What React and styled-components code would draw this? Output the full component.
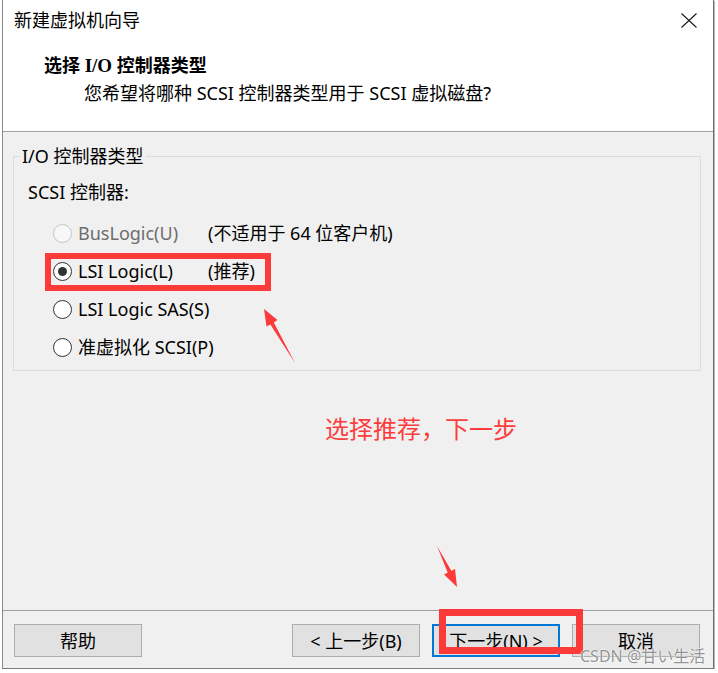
import React from "react";
import styled, { createGlobalStyle } from "styled-components";

const GlobalStyle = createGlobalStyle`
  html, body { margin: 0; padding: 0; background: #ffffff; }
  body { font-family: "Noto Sans", "Noto Sans CJK SC", sans-serif; color: #000; }
  * { box-sizing: border-box; }
`;

const Window = styled.div`
  position: relative;
  margin-left: 2px;
  width: 712px;
  height: 669px;
  background: #f0f0f0;
  border-left: 1px solid #8a8a8a;
  border-right: 1px solid #6f6f6f;
  border-bottom: 1px solid #7a7a7a;
  box-shadow: 1px 1px 0 #b8b8b8;
  display: flex;
  flex-direction: column;
`;

const Header = styled.div`
  height: 132px;
  background: #ffffff;
  border-bottom: 1px solid #a0a0a0;
  display: flex;
  flex-direction: column;
`;

const TitleBar = styled.div`
  height: 40px;
  display: flex;
  align-items: center;
  justify-content: space-between;
  padding: 0 16px 0 11px;
`;

const Title = styled.div`
  font-size: 18px;
  line-height: 24px;
`;

const Heading = styled.div`
  margin-top: 12px;
  padding-left: 41px;
  font-size: 18px;
  line-height: 26px;
  font-weight: 700;
`;

const SerifLatin = styled.span`
  font-family: "Liberation Serif", "Noto Sans CJK SC", serif;
  font-size: 19px;
`;

const Subtitle = styled.div`
  margin-top: 1px;
  padding-left: 81px;
  font-size: 18px;
  line-height: 26px;
`;

const Body = styled.div`
  height: 479px;
  border-bottom: 1px solid #a0a0a0;
  padding: 13px 12px 0 10px;
  display: flex;
  flex-direction: column;
`;

const Group = styled.fieldset`
  margin: 0;
  padding: 0 0 4px 0;
  width: 688px;
  border: 1px solid #dcdcdc;
  min-width: 0;
`;

const Legend = styled.legend`
  margin-left: 6px;
  padding: 0 2px;
  font-size: 18px;
  line-height: 22px;
`;

const SectionLabel = styled.div`
  margin: 13px 0 10px 14px;
  font-size: 18px;
  line-height: 24px;
`;

const OptionRow = styled.div`
  height: 38px;
  display: flex;
  align-items: center;
  padding-left: 39px;
  font-size: 18px;
  color: ${(p) => (p.$disabled ? "#6d6d6d" : "#000")};
`;

const Radio = styled.span`
  position: relative;
  flex: none;
  width: 19px;
  height: 19px;
  border-radius: 50%;
  border: 1px solid ${(p) => (p.$disabled ? "#c4c4c4" : "#333333")};
  background: ${(p) => (p.$disabled ? "#f7f7f7" : "#ffffff")};
  margin-right: 6px;
  &::after {
    content: "";
    display: ${(p) => (p.$checked ? "block" : "none")};
    position: absolute;
    left: 4px;
    top: 4px;
    width: 9px;
    height: 9px;
    border-radius: 50%;
    background: #333333;
  }
`;

const OptionLabel = styled.span`
  width: 130px;
  flex: none;
  line-height: 24px;
  white-space: nowrap;
`;

const OptionNote = styled.span`
  color: #000;
  line-height: 24px;
  white-space: nowrap;
`;

const Hint = styled.div`
  margin-top: 42px;
  padding-left: 312px;
  font-size: 24px;
  line-height: 32px;
  color: #fc3d3d;
`;

const Footer = styled.div`
  height: 57px;
  padding: 13px 13px 0 11px;
  display: flex;
  align-items: flex-start;
  gap: 12px;
`;

const Spacer = styled.div`
  flex: 1;
`;

const Button = styled.div`
  width: 128px;
  height: 33px;
  display: flex;
  align-items: center;
  justify-content: center;
  background: #e1e1e1;
  border: ${(p) => (p.$default ? "2px solid #0078d7" : "1px solid #adadad")};
  font-size: 18px;
  line-height: 24px;
  color: #000;
  white-space: nowrap;
`;

const RedBox = styled.div`
  position: absolute;
  left: ${(p) => p.$x - 3}px;
  top: ${(p) => p.$y}px;
  width: ${(p) => p.$w}px;
  height: ${(p) => p.$h}px;
  border: ${(p) => p.$t}px solid #fc3a3a;
  pointer-events: none;
`;

const ArrowLayer = styled.svg`
  position: absolute;
  left: 0;
  top: 0;
  width: 710px;
  height: 668px;
  pointer-events: none;
`;

const Watermark = styled.div`
  position: absolute;
  left: 577px;
  top: 645px;
  font-size: 16px;
  line-height: 22px;
  color: rgba(110, 110, 110, 0.75);
  text-shadow: 0 0 2px #ffffff, 0 0 1px #ffffff;
  white-space: nowrap;
  pointer-events: none;
`;

const CloseIcon = () => (
  <svg width="16" height="15" viewBox="0 0 16 15" aria-hidden="true">
    <path d="M0.5 0.5 L15.5 14.5 M15.5 0.5 L0.5 14.5" stroke="#1a1a1a" strokeWidth="1.1" fill="none" />
  </svg>
);

const options = [
  { label: "BusLogic(U)", note: "(不适用于 64 位客户机)", disabled: true },
  { label: "LSI Logic(L)", note: "(推荐)", checked: true },
  { label: "LSI Logic SAS(S)" },
  { label: "准虚拟化 SCSI(P)" },
];

export default function App() {
  return (
    <>
      <GlobalStyle />
      <Window>
        <Header>
          <TitleBar>
            <Title>新建虚拟机向导</Title>
            <CloseIcon />
          </TitleBar>
          <Heading>
            选择 <SerifLatin>I/O</SerifLatin> 控制器类型
          </Heading>
          <Subtitle>您希望将哪种 SCSI 控制器类型用于 SCSI 虚拟磁盘?</Subtitle>
        </Header>
        <Body>
          <Group>
            <Legend>I/O 控制器类型</Legend>
            <SectionLabel>SCSI 控制器:</SectionLabel>
            {options.map((o) => (
              <OptionRow key={o.label} $disabled={o.disabled}>
                <Radio $checked={o.checked} $disabled={o.disabled} />
                <OptionLabel>{o.label}</OptionLabel>
                {o.note && <OptionNote>{o.note}</OptionNote>}
              </OptionRow>
            ))}
          </Group>
          <Hint>选择推荐，下一步</Hint>
        </Body>
        <Footer>
          <Button>帮助</Button>
          <Spacer />
          <Button>&lt; 上一步(B)</Button>
          <Button $default>下一步(N) &gt;</Button>
          <Button>取消</Button>
        </Footer>

        <RedBox $x={45} $y={253} $w={226} $h={38} $t={6} />
        <RedBox $x={439} $y={609} $w={144} $h={45} $t={7} />
        <ArrowLayer viewBox="3 0 710 668">
          <polygon
            points="264,309 277.5,320 273.8,322.6 295,363 270.4,324.6 266.5,326.5"
            fill="#fc3a3a"
          />
          <polygon
            points="457,587 444,574.5 447.7,572.6 437,546 451.3,570.8 455,569"
            fill="#fc3a3a"
          />
        </ArrowLayer>
        <Watermark>CSDN @甘い生活</Watermark>
      </Window>
    </>
  );
}
